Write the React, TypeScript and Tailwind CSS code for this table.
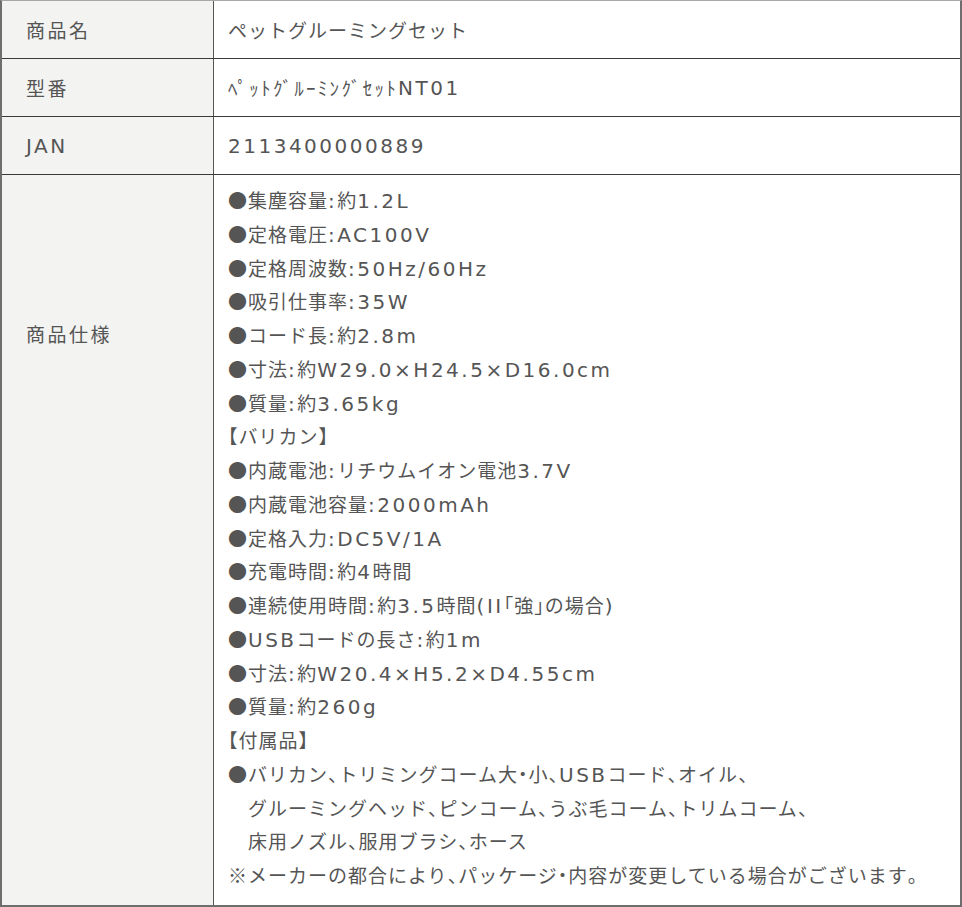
import React from "react";

const LATIN = /[\u0020-\u007E\u00D7]/;
const PUNCT = /[、。・「」【】]/;
const HALF = /[\uFF61-\uFF9F]/;

function kind(ch: string): number {
  if (LATIN.test(ch)) return 1;
  if (PUNCT.test(ch)) return 2;
  if (HALF.test(ch)) return 3;
  return 0;
}

function T({ text }: { text: string }) {
  const runs: { k: number; s: string }[] = [];
  for (const ch of Array.from(text)) {
    const k = kind(ch);
    const last = runs[runs.length - 1];
    if (last && last.k === k) last.s += ch;
    else runs.push({ k, s: ch });
  }
  return (
    <>
      {runs.map((r, i) =>
        r.k === 1 ? (
          <span key={i} className="font-['DejaVu_Sans',sans-serif] text-[20px] leading-none tracking-[2.5px]">
            {r.s}
          </span>
        ) : r.k === 2 ? (
          <span key={i} className="leading-none [font-feature-settings:'halt']">
            {r.s}
          </span>
        ) : r.k === 3 ? (
          <span key={i} className="tracking-[2.3px]">
            {r.s}
          </span>
        ) : (
          <span key={i}>{r.s}</span>
        )
      )}
    </>
  );
}

const specs: { t: string; indent?: boolean }[] = [
  { t: "●集塵容量:約1.2L" },
  { t: "●定格電圧:AC100V" },
  { t: "●定格周波数:50Hz/60Hz" },
  { t: "●吸引仕事率:35W" },
  { t: "●コード長:約2.8m" },
  { t: "●寸法:約W29.0×H24.5×D16.0cm" },
  { t: "●質量:約3.65kg" },
  { t: "【バリカン】" },
  { t: "●内蔵電池:リチウムイオン電池3.7V" },
  { t: "●内蔵電池容量:2000mAh" },
  { t: "●定格入力:DC5V/1A" },
  { t: "●充電時間:約4時間" },
  { t: "●連続使用時間:約3.5時間(II「強」の場合)" },
  { t: "●USBコードの長さ:約1m" },
  { t: "●寸法:約W20.4×H5.2×D4.55cm" },
  { t: "●質量:約260g" },
  { t: "【付属品】" },
  { t: "●バリカン、トリミングコーム大・小、USBコード、オイル、" },
  { t: "グルーミングヘッド、ピンコーム、うぶ毛コーム、トリムコーム、", indent: true },
  { t: "床用ノズル、服用ブラシ、ホース", indent: true },
  { t: "※メーカーの都合により、パッケージ・内容が変更している場合がございます。" },
];

function Row({ label, value }: { label: string; value: string }) {
  return (
    <div className="flex h-[58px] border-b border-b-[#3a3a3a]">
      <div className="w-[212px] shrink-0 bg-[#f3f3f1] border-r border-r-[#555555] pl-[24px] flex items-center tracking-[2.5px]">
        <T text={label} />
      </div>
      <div className="flex-1 bg-white pl-[14px] flex items-center">
        <T text={value} />
      </div>
    </div>
  );
}

export default function App() {
  return (
    <div className="w-[962px] bg-white">
      <div className="w-[962px] border-x-2 border-b-2 border-t border-[#6e6e6e] border-t-[#a8a8a8] text-[#555555] text-[19px] leading-[33.75px] tracking-[1px] font-['Noto_Sans_CJK_JP',sans-serif]">
        <Row label="商品名" value="ペットグルーミングセット" />
        <Row label="型番" value="ﾍﾟｯﾄｸﾞﾙｰﾐﾝｸﾞｾｯﾄNT01" />
        <Row label="JAN" value="2113400000889" />
        <div className="flex">
          <div className="w-[212px] shrink-0 bg-[#f3f3f1] border-r border-r-[#555555] pl-[24px] pt-[142px] tracking-[2.5px]">
            <T text="商品仕様" />
          </div>
          <div className="flex-1 bg-white pl-[14px] pt-[8px] pb-[13px]">
            {specs.map((s, i) => (
              <div key={i} className={s.indent ? "h-[33.75px] pl-[20px] whitespace-nowrap" : "h-[33.75px] whitespace-nowrap"}>
                <T text={s.t} />
              </div>
            ))}
          </div>
        </div>
      </div>
    </div>
  );
}
